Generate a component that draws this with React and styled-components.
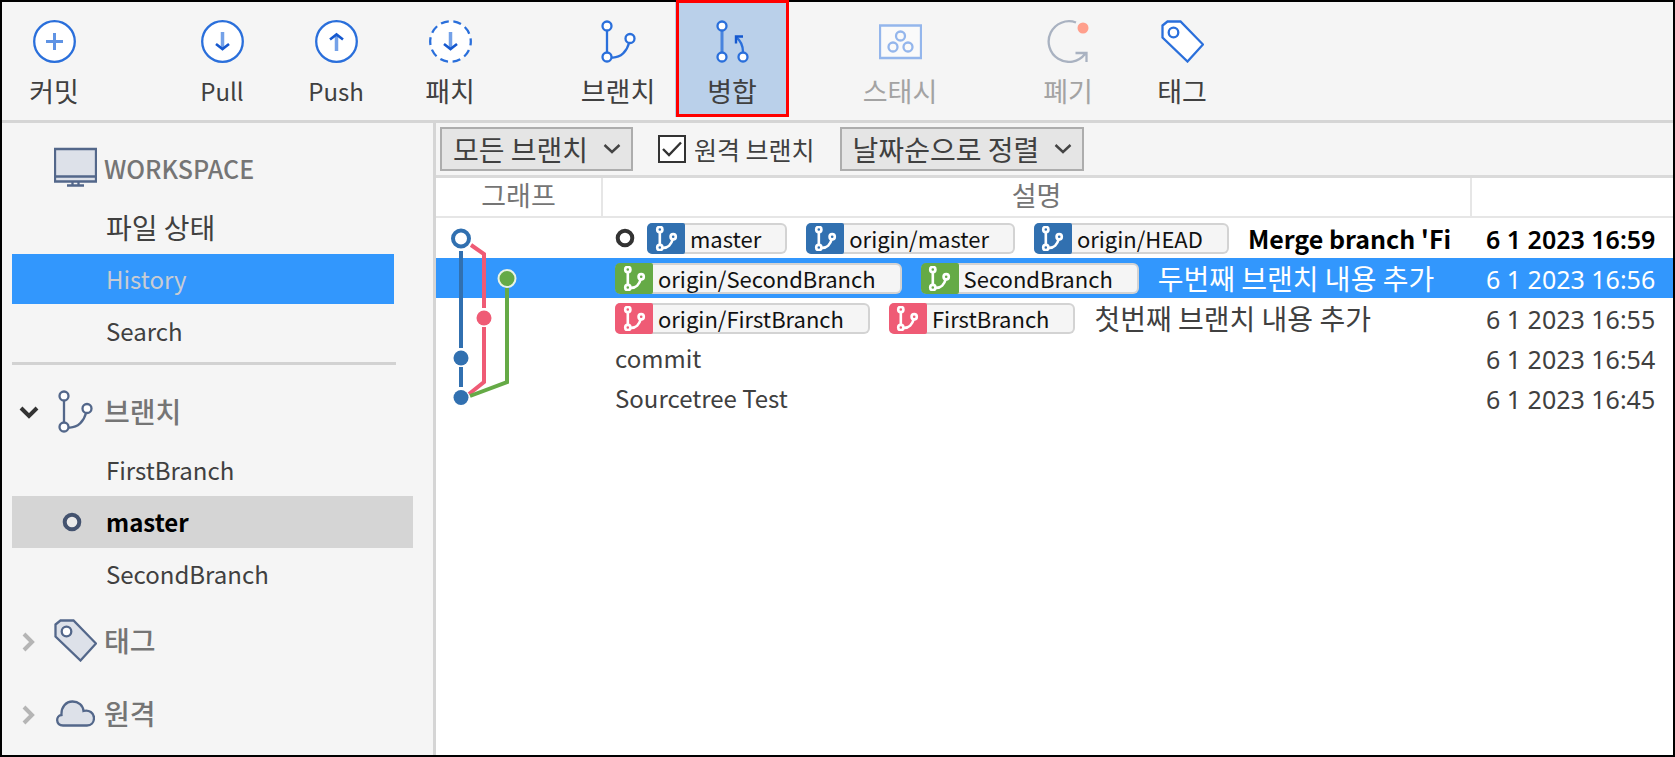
import styled, { createGlobalStyle, css } from "styled-components";

const BLUE = "#2a6fdb";
const SLATE = "#53678a";

const GlobalStyle = createGlobalStyle`
  * {
    box-sizing: border-box;
  }

  body {
    margin: 0;
    color: #404040;
    font-family: "Noto Sans CJK KR", "Noto Sans", sans-serif;
    font-size: 24px;
    line-height: 32px;
  }

  button, select, input {
    font: inherit;
    color: inherit;
  }

  svg {
    display: block;
    flex-shrink: 0;
  }
`;

const Window = styled.div`
  display: flex;
  flex-direction: column;
  min-height: 100vh;
  background: #f5f5f5;
  border: 2px solid #000;
`;

const Toolbar = styled.header`
  display: flex;
  gap: 54px;
  height: 121px;
  border-bottom: 3px solid #d5d5d5;
`;

const ToolGroup = styled.div`
  display: flex;

  &:first-child {
    margin-left: -5px;
  }
`;

const ToolButton = styled.button`
  position: relative;
  display: flex;
  flex-direction: column;
  align-items: center;
  gap: 12px;
  width: 114px;
  height: 115px;
  padding: 18px 0 0;
  border: none;
  background: ${(props) => (props.$active ? "#bad0ea" : "none")};

  &:disabled {
    color: #a3a3a3;
  }

  ${(props) =>
    props.$active &&
    css`
      &::after {
        content: "";
        position: absolute;
        inset: -2px 0 0 1px;
        border: 3px solid #f00;
      }
    `}
`;

const ToolLabel = styled.span`
  font-size: ${(props) => (props.$latin ? "24px" : "27px")};
`;

const Body = styled.div`
  display: flex;
  flex: 1;
`;

const Sidebar = styled.nav`
  width: 434px;
  flex-shrink: 0;
  padding: 5px 20px 0 10px;
  border-right: 3px solid #d5d5d5;
`;

const Heading = styled.h2`
  display: grid;
  grid-template-columns: 34px 42px 1fr;
  column-gap: 8px;
  align-items: center;
  height: 66px;
  margin: 7px 0 0;
  color: #757575;
  font-size: ${(props) => (props.$latin ? "25px" : "28px")};
  font-weight: 500;
`;

const Toggle = styled.button`
  display: flex;
  justify-content: center;
  padding: 4px 0 0;
  border: none;
  background: none;
`;

const HeadingIcon = styled.span`
  display: flex;
  justify-content: center;
`;

const NavList = styled.ul`
  margin: 0;
  padding: 0;
  list-style: none;
`;

const NavItem = styled.button`
  display: grid;
  grid-template-columns: 94px 1fr;
  align-items: center;
  width: 100%;
  height: 52px;
  padding: 0;
  border: none;
  background: none;
  font-size: ${(props) => (props.$korean ? "28px" : "24px")};
  text-align: left;

  & > span {
    grid-column: 2;
  }

  & > svg {
    grid-row: 1;
    margin-left: 50px;
  }

  ${(props) =>
    props.$selected &&
    css`
      width: calc(100% - 19px);
      height: 50px;
      margin: 1px 0;
      background: #3297fd;
      color: #c9ccd3;
    `}

  ${(props) =>
    props.$current &&
    css`
      background: #d5d5d5;
      color: #000;
      font-weight: 600;
    `}
`;

const Divider = styled.hr`
  height: 3px;
  margin: 5px 17px 13px 0;
  border: none;
  background: #d2d2d2;
`;

const Main = styled.main`
  flex: 1;
  min-width: 0;
  background: #fff;
`;

const FilterBar = styled.div`
  display: flex;
  align-items: center;
  gap: 25px;
  height: 55px;
  padding: 0 4px;
  background: #f5f5f5;
  border-bottom: 3px solid #dadada;
`;

const SelectBox = styled.div`
  position: relative;

  & > svg {
    position: absolute;
    top: 16px;
    right: 12px;
    pointer-events: none;
  }
`;

const Select = styled.select`
  appearance: none;
  display: block;
  height: 44px;
  padding: 0 42px 0 11px;
  border: 2px solid #adadad;
  border-radius: 0;
  background: #e5e5e5;
  font-size: 28px;
`;

const CheckLabel = styled.label`
  display: flex;
  align-items: center;
  gap: 8px;
  font-size: 25px;
`;

const CheckBox = styled.span`
  display: grid;

  & > * {
    grid-area: 1 / 1;
  }

  & > svg {
    pointer-events: none;
    visibility: hidden;
  }

  & > input:checked + svg {
    visibility: visible;
  }
`;

const CheckInput = styled.input`
  appearance: none;
  width: 28px;
  height: 28px;
  margin: 0;
  border: 2px solid #333;
  background: #fff;
`;

const Table = styled.table`
  width: 100%;
  table-layout: fixed;
  border-collapse: separate;
  border-spacing: 0;
`;

const Th = styled.th`
  width: ${(props) => props.$width};
  height: 40px;
  padding: 0 0 4px;
  border-bottom: 2px solid #e6e6e6;
  color: #757575;
  font-size: 27px;
  font-weight: 400;
  line-height: 34px;

  &:not(:last-child) {
    border-right: 2px solid #e6e6e6;
  }
`;

const Row = styled.tr`
  height: 40px;
  background: ${(props) => (props.$selected ? "#3297fd" : "none")};
  color: ${(props) => (props.$selected ? "#fff" : props.$head ? "#000" : "inherit")};
  font-weight: ${(props) => (props.$head ? 600 : 400)};
`;

const Td = styled.td`
  padding: 0;
`;

const DateCell = styled.td`
  padding: 2px 0 0 14px;
  font-family: "Noto Sans", sans-serif;
  font-size: 25px;
  line-height: 32px;
  white-space: nowrap;
`;

const Description = styled.div`
  display: flex;
  align-items: center;
  gap: 19px;
  height: 40px;
  padding-left: 12px;
  overflow: hidden;
  white-space: nowrap;
`;

const HeadMark = styled.span`
  margin-right: -7px;
`;

const Tag = styled.span`
  display: flex;
  align-items: center;
  height: 31px;
  padding-right: 24px;
  border: 2px solid #d3d3d3;
  border-left: none;
  border-radius: 6px;
  background: #f5f5f5;
  color: #111;
  font-size: 22px;
  font-weight: 400;
`;

const TagIcon = styled.span`
  display: flex;
  align-items: center;
  justify-content: center;
  width: 38px;
  height: 31px;
  margin-right: 5px;
  border-radius: 5px 2px 2px 5px;
  background: ${(props) => props.$color};
`;

const Message = styled.span`
  font-size: ${(props) => (props.$head ? "25px" : props.$latin ? "24px" : "28px")};
`;

function BranchIcon({ color, size = 43, stroke = 2.3, fill = "#fff" }) {
  return (
    <svg width={size} height={size} viewBox="0 0 43 43" fill="none" stroke={color} strokeWidth={stroke}>
      <path d="M10 11V32M15 37.5C24 38 30 31 32 23" />
      <circle cx="10" cy="6" r="4.5" fill={fill} />
      <circle cx="10" cy="37" r="4.5" fill={fill} />
      <circle cx="33" cy="18.5" r="4.5" fill={fill} />
    </svg>
  );
}

function TagShape({ color, fill }) {
  return (
    <svg width="43" height="43" viewBox="0 0 43 43" fill={fill} stroke={color} strokeWidth="2.3">
      <path d="M1.5 5.5L6.5 1.5H19.5L42 24.5L26.5 41.5L1.5 17.5Z" />
      <circle cx="12.5" cy="12.5" r="4.8" fill="#fff" />
    </svg>
  );
}

function CircleIcon({ dashed, children }) {
  return (
    <svg width="43" height="43" viewBox="0 0 43 43" fill="none" stroke={BLUE} strokeWidth="2.3">
      <circle cx="21.5" cy="21.5" r="20.3" fill="#fff" strokeDasharray={dashed ? "8 4.75" : undefined} strokeDashoffset="4" />
      {children}
    </svg>
  );
}

function CommitIcon() {
  return (
    <CircleIcon>
      <path d="M13 21.5H30M21.5 13V30" strokeWidth="3" opacity="0.75" />
    </CircleIcon>
  );
}

function DownIcon({ dashed }) {
  return (
    <CircleIcon dashed={dashed}>
      <path d="M21.5 12V28" strokeWidth="3.5" opacity="0.65" />
      <path d="M15 24L21.5 29L28 24" stroke="#1558cf" strokeWidth="2.6" />
    </CircleIcon>
  );
}

function UpIcon() {
  return (
    <CircleIcon>
      <path d="M21.5 15V31" strokeWidth="3.5" opacity="0.65" />
      <path d="M15 19.5L21.5 14.5L28 19.5" stroke="#1558cf" strokeWidth="2.6" />
    </CircleIcon>
  );
}

function MergeIcon() {
  return (
    <svg width="43" height="43" viewBox="0 0 43 43" fill="none" stroke={BLUE} strokeWidth="2.3">
      <path d="M11 11V32" strokeWidth="3" opacity="0.8" />
      <path d="M32 32C32 26 30 21 25 17" strokeWidth="2.3" />
      <path d="M32 16.5H25V23.5" stroke="#1558cf" strokeWidth="2.4" />
      <circle cx="11" cy="6" r="4.5" fill="#fff" />
      <circle cx="11" cy="37" r="4.5" fill="#fff" />
      <circle cx="32" cy="37" r="4.5" fill="#fff" />
    </svg>
  );
}

function StashIcon() {
  return (
    <svg width="43" height="43" viewBox="0 0 43 43" fill="#fafafa" stroke="#94b6ec" strokeWidth="2.3">
      <path d="M1 5.5H42V38H1Z" />
      <circle cx="21.5" cy="16" r="4.5" />
      <circle cx="14" cy="27" r="4.5" />
      <circle cx="29" cy="27" r="4.5" />
    </svg>
  );
}

function DiscardIcon() {
  return (
    <svg width="43" height="43" viewBox="0 0 43 43" fill="none" stroke="#a9b2c1" strokeWidth="2.3">
      <path d="M29 2.5A20.3 20.3 0 1 0 38 34M28.500 33H39.500V42" />
      <circle cx="36" cy="8" r="5.5" fill="#ff9f8c" stroke="none" />
    </svg>
  );
}

function MonitorIcon() {
  return (
    <svg width="43" height="43" viewBox="0 0 43 43" fill="#dde1e9" stroke={SLATE} strokeWidth="2.3">
      <path d="M1 2H42V34.5H1Z" />
      <path d="M1 29.5H42M18.5 35V38M24.5 35V38M13 38.5H30" />
    </svg>
  );
}

function CloudIcon() {
  return (
    <svg width="39" height="27" viewBox="0 0 39 27" fill="#dde1e9" stroke={SLATE} strokeWidth="2.3">
      <path d="M7 25.5C-0.500 25.5 -0.500 15.5 5.5 15C5 7 10 1.5 16.5 1.5C22.5 1.5 27 5.5 27.5 11C33 9.5 38 13 38 18C38 22.5 35 25.5 31 25.5Z" />
    </svg>
  );
}

function Chevron({ open }) {
  return open ? (
    <svg width="20" height="14" viewBox="0 0 20 14" fill="none" stroke="#333" strokeWidth="4">
      <path d="M2 2L10 10L18 2" />
    </svg>
  ) : (
    <svg width="14" height="20" viewBox="0 0 14 20" fill="none" stroke="#b5b5b5" strokeWidth="4">
      <path d="M2 2L10 10L2 18" />
    </svg>
  );
}

function Ring({ color }) {
  return (
    <svg width="20" height="20" viewBox="0 0 20 20" fill="none" stroke={color} strokeWidth="4">
      <circle cx="10" cy="10" r="7.3" fill="#fff" fillOpacity="0.5" />
    </svg>
  );
}

const blue = "#3170b0";
const green = "#65aa46";
const pink = "#ef5b75";

// one drawing for the whole history, every row shows its own 40px slice
function Graph({ index }) {
  return (
    <svg width="165" height="40" viewBox={`0 ${index * 40} 165 40`} fill="none" strokeWidth="4">
      <path d="M25 33V130M25 149V169" stroke={blue} />
      <path d="M35 27L48 36V90M48 109V164L33 176" stroke={pink} />
      <path d="M71 70V164L34 178" stroke={green} />
      <circle cx="25" cy="20.5" r="8" stroke={blue} fill="#fff" />
      <circle cx="71" cy="60.5" r="8.5" stroke="#e8f3e4" strokeWidth="2" fill={green} />
      <circle cx="48" cy="100" r="7.5" fill={pink} />
      <circle cx="25" cy="140" r="7.5" fill={blue} />
      <circle cx="25" cy="179.5" r="7.5" fill={blue} />
    </svg>
  );
}

const tools = [
  [{ label: "커밋", icon: <CommitIcon /> }],
  [
    { label: "Pull", latin: true, icon: <DownIcon /> },
    { label: "Push", latin: true, icon: <UpIcon /> },
    { label: "패치", icon: <DownIcon dashed /> },
  ],
  [
    { label: "브랜치", icon: <BranchIcon color={BLUE} /> },
    { label: "병합", icon: <MergeIcon />, active: true },
  ],
  [{ label: "스태시", icon: <StashIcon />, disabled: true }],
  [
    { label: "폐기", icon: <DiscardIcon />, disabled: true },
    { label: "태그", icon: <TagShape color={BLUE} fill="#fff" /> },
  ],
];

const commits = [
  {
    tags: ["master", "origin/master", "origin/HEAD"],
    color: blue,
    message: "Merge branch 'Fi",
    latin: true,
    date: "6 1 2023 16:59",
    head: true,
  },
  {
    tags: ["origin/SecondBranch", "SecondBranch"],
    color: green,
    message: "두번째 브랜치 내용 추가",
    date: "6 1 2023 16:56",
    selected: true,
  },
  {
    tags: ["origin/FirstBranch", "FirstBranch"],
    color: pink,
    message: "첫번째 브랜치 내용 추가",
    date: "6 1 2023 16:55",
  },
  { tags: [], message: "commit", latin: true, date: "6 1 2023 16:54" },
  { tags: [], message: "Sourcetree Test", latin: true, date: "6 1 2023 16:45" },
];

function Dropdown({ name, option }) {
  return (
    <SelectBox>
      <Select aria-label={name}>
        <option>{option}</option>
      </Select>
      <svg width="18" height="12" viewBox="0 0 18 12" fill="none" stroke="#444" strokeWidth="2.4">
        <path d="M1.5 2L9 9L16.5 2" />
      </svg>
    </SelectBox>
  );
}

function CommitRow({ commit, index }) {
  const { tags, color, message, latin, date, head, selected } = commit;
  return (
    <Row $head={head} $selected={selected}>
      <Td>
        <Graph index={index} />
      </Td>
      <Td>
        <Description>
          {head && (
            <HeadMark>
              <Ring color="#333" />
            </HeadMark>
          )}
          {tags.map((tag) => (
            <Tag key={tag}>
              <TagIcon $color={color}>
                <BranchIcon color="#fff" size={25} stroke={4.5} fill={color} />
              </TagIcon>
              {tag}
            </Tag>
          ))}
          <Message $latin={latin} $head={head}>
            {message}
          </Message>
        </Description>
      </Td>
      <DateCell>{date}</DateCell>
    </Row>
  );
}

export default function App() {
  return (
    <>
      <GlobalStyle />
      <Window>
        <Toolbar>
          {tools.map((group) => (
            <ToolGroup key={group[0].label}>
              {group.map((tool) => (
                <ToolButton key={tool.label} $active={tool.active} disabled={tool.disabled}>
                  {tool.icon}
                  <ToolLabel $latin={tool.latin}>{tool.label}</ToolLabel>
                </ToolButton>
              ))}
            </ToolGroup>
          ))}
        </Toolbar>
        <Body>
          <Sidebar>
            <Heading $latin>
              <span />
              <HeadingIcon>
                <MonitorIcon />
              </HeadingIcon>
              WORKSPACE
            </Heading>
            <NavList>
              <li>
                <NavItem $korean>
                  <span>파일 상태</span>
                </NavItem>
              </li>
              <li>
                <NavItem $selected>
                  <span>History</span>
                </NavItem>
              </li>
              <li>
                <NavItem>
                  <span>Search</span>
                </NavItem>
              </li>
            </NavList>
            <Divider />
            <Heading>
              <Toggle aria-label="브랜치">
                <Chevron open />
              </Toggle>
              <HeadingIcon>
                <BranchIcon color={SLATE} />
              </HeadingIcon>
              브랜치
            </Heading>
            <NavList>
              <li>
                <NavItem>
                  <span>FirstBranch</span>
                </NavItem>
              </li>
              <li>
                <NavItem $current>
                  <Ring color="#44536f" />
                  <span>master</span>
                </NavItem>
              </li>
              <li>
                <NavItem>
                  <span>SecondBranch</span>
                </NavItem>
              </li>
            </NavList>
            <Heading>
              <Toggle aria-label="태그">
                <Chevron />
              </Toggle>
              <HeadingIcon>
                <TagShape color={SLATE} fill="#dde1e9" />
              </HeadingIcon>
              태그
            </Heading>
            <Heading>
              <Toggle aria-label="원격">
                <Chevron />
              </Toggle>
              <HeadingIcon>
                <CloudIcon />
              </HeadingIcon>
              원격
            </Heading>
          </Sidebar>
          <Main>
            <FilterBar>
              <Dropdown name="브랜치" option="모든 브랜치" />
              <CheckLabel>
                <CheckBox>
                  <CheckInput type="checkbox" defaultChecked />
                  <svg width="28" height="28" viewBox="0 0 28 28" fill="none" stroke="#333" strokeWidth="2.4">
                    <path d="M5 14L11 20L23 7.5" />
                  </svg>
                </CheckBox>
                원격 브랜치
              </CheckLabel>
              <Dropdown name="정렬" option="날짜순으로 정렬" />
            </FilterBar>
            <Table>
              <thead>
                <tr>
                  <Th $width="167px">그래프</Th>
                  <Th>설명</Th>
                  <Th $width="201px" aria-label="날짜" />
                </tr>
              </thead>
              <tbody>
                {commits.map((commit, i) => (
                  <CommitRow key={commit.date} commit={commit} index={i} />
                ))}
              </tbody>
            </Table>
          </Main>
        </Body>
      </Window>
    </>
  );
}
